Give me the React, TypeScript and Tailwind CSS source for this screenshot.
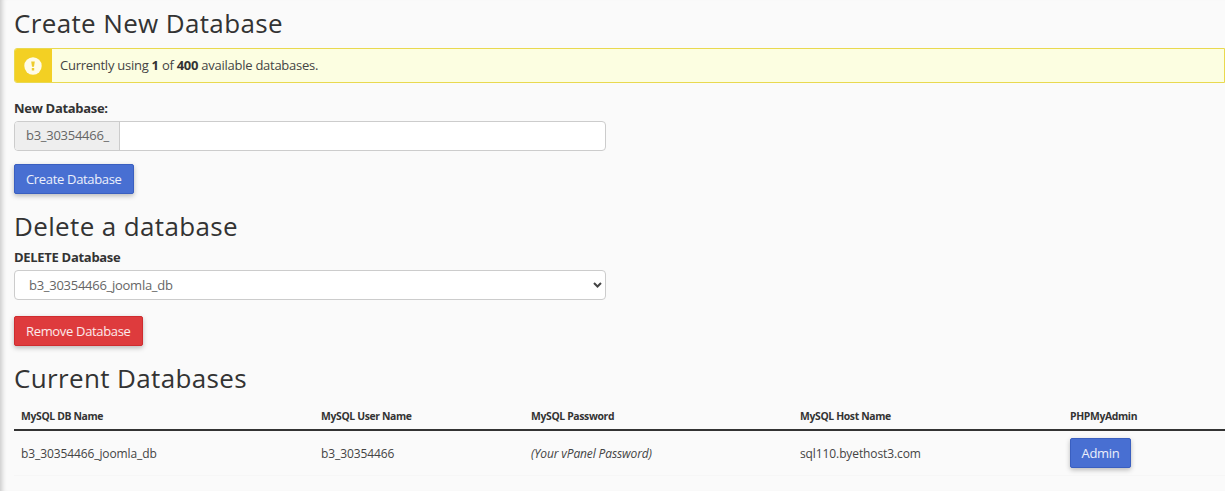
import type { ReactNode } from 'react';

function Heading({ children, className = '' }: { children: ReactNode; className?: string }) {
  return <h1 className={`text-[26px] leading-[30px] font-normal tracking-[0.36px] text-[#333] ${className}`}>{children}</h1>;
}

function Button({ children, tone = 'blue', className = 'px-[11px]' }: { children: ReactNode; tone?: 'blue' | 'red'; className?: string }) {
  const color = tone === 'blue' ? 'bg-[#486fd2] border-[#3a5fc0]' : 'bg-[#de3b3d] border-[#cf2c2f]';
  return (
    <button
      className={`h-[30px] rounded-[2px] border text-[13px] leading-[18px] tracking-[-0.33px] whitespace-nowrap text-white/90 shadow-[0_2px_5px_rgba(0,0,0,0.26)] ${className} ${color}`}
    >
      {children}
    </button>
  );
}

export default function App() {
  return (
    <div className="h-[492px] w-[1225px] overflow-hidden bg-white font-['Open_Sans','Noto_Sans',sans-serif] text-[13px] leading-[18px] text-[#444]">
      <main className="flex h-[491px] flex-col items-start bg-[#fafafa] pt-[8px] pl-[14px] shadow-[inset_6px_0_5px_-4px_rgba(0,0,0,0.2)]">
        <Heading>Create New Database</Heading>

        <div className="mt-[10px] flex h-[35px] w-full overflow-hidden rounded-l-[3px] border border-[#e9d94f] bg-[#fcfee1]">
          <div className="flex w-[37px] items-center justify-center bg-[#f3d023] pr-[2px]">
            <svg width="18" height="18" viewBox="0 0 18 18">
              <circle cx="9" cy="9" r="8.7" fill="#fffce8" />
              <path d="M7.2 4.5h3.6l-.8 5.3H8z M7.8 11h2.4v2.5H7.8z" fill="#edcc2c" />
            </svg>
          </div>
          <p className="flex-1 pt-[7px] pl-[8px] tracking-[-0.26px]">
            Currently using <b className="text-[#333]">1</b> of <b className="text-[#333]">400</b> available databases.
          </p>
        </div>

        <label className="mt-[16px] font-bold tracking-[-0.3px] text-[#333]">New Database:</label>
        <div className="mt-[4px] flex h-[30px] w-[592px] overflow-hidden rounded-[4px] border border-[#ccc] bg-white">
          <span className="w-[105px] shrink-0 border-r border-[#ccc] bg-[#eee] pt-[4px] pl-[11px] tracking-[-0.27px] text-[#666]">b3_30354466_</span>
          <input className="min-w-0 flex-1 outline-none" />
        </div>
        <div className="mt-[13px] flex">
          <Button>Create Database</Button>
        </div>

        <Heading className="mt-[17px]">Delete a database</Heading>
        <label className="mt-[7px] font-bold tracking-[-0.3px] text-[#333]">DELETE Database</label>
        <div className="mt-[4px] flex h-[30px] w-[592px] items-center justify-between rounded-[4px] border border-[#ccc] bg-white pr-[3px] pl-[14px] tracking-[-0.27px] text-[#666]">
          <span>b3_30354466_joomla_db</span>
          <svg width="9" height="6" viewBox="0 0 9 6" fill="none" stroke="#444" strokeWidth="2">
            <path d="M1 1l3.5 3.5L8 1" />
          </svg>
        </div>
        <div className="mt-[16px] flex">
          <Button tone="red">Remove Database</Button>
        </div>

        <Heading className="mt-[17px]">Current Databases</Heading>
        <div className="mt-[9px] grid h-[29px] w-full shrink-0 grid-cols-[300px_210px_269px_270px_1fr] border-b-2 border-[#333] pt-[5px] pl-[7px] text-[10.4px] font-bold tracking-[-0.35px] text-[#333]">
          <span>MySQL DB Name</span>
          <span>MySQL User Name</span>
          <span>MySQL Password</span>
          <span>MySQL Host Name</span>
          <span>PHPMyAdmin</span>
        </div>
        <div className="grid h-[45px] w-full shrink-0 grid-cols-[300px_210px_269px_270px_1fr] items-center border-b border-[#f6f6f6] pl-[7px] text-[12px]">
          <span className="pt-[2px] tracking-[-0.1px]">b3_30354466_joomla_db</span>
          <span className="pt-[2px] tracking-[-0.1px]">b3_30354466</span>
          <span className="pt-[2px] tracking-[-0.12px] italic">(Your vPanel Password)</span>
          <span className="pt-[2px] tracking-[-0.1px]">sql110.byethost3.com</span>
          <span className="flex">
            <Button className="w-[61px] px-[10px]">Admin</Button>
          </span>
        </div>
      </main>
    </div>
  );
}
